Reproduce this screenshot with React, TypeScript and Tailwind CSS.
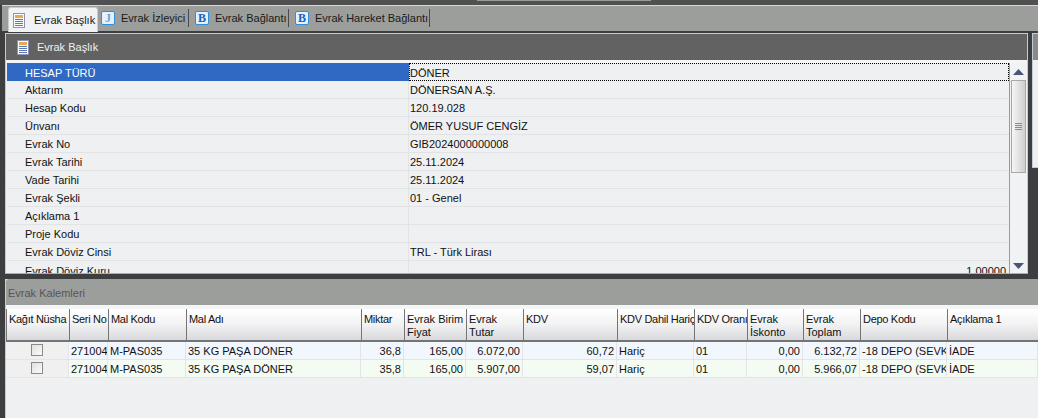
import React from 'react';

const font = 'font-["Liberation_Sans","Arial",sans-serif]';

const fields: [string, string][] = [
  ['Aktarım', 'DÖNERSAN A.Ş.'],
  ['Hesap Kodu', '120.19.028'],
  ['Ünvanı', 'ÖMER YUSUF CENGİZ'],
  ['Evrak No', 'GIB2024000000008'],
  ['Evrak Tarihi', '25.11.2024'],
  ['Vade Tarihi', '25.11.2024'],
  ['Evrak Şekli', '01 - Genel'],
  ['Açıklama 1', ''],
  ['Proje Kodu', ''],
  ['Evrak Döviz Cinsi', 'TRL - Türk Lirası'],
];

const cols = [
  'Kağıt Nüsha', 'Seri No', 'Mal Kodu', 'Mal Adı', 'Miktar', 'Evrak Birim Fiyat', 'Evrak Tutar', 'KDV',
  'KDV Dahil Hariç', 'KDV Oranı', 'Evrak İskonto', 'Evrak Toplam', 'Depo Kodu', 'Açıklama 1',
];

const gridCols = 'grid-cols-[63px_39px_78px_175px_43px_62px_57px_94px_77px_53px_56px_57px_87px_91px]';

const rows = [
  { bg: 'bg-[#f2f7fe]', cells: ['271004', 'M-PAS035', '35 KG PAŞA DÖNER', '36,8', '165,00', '6.072,00', '60,72', 'Hariç', '01', '0,00', '6.132,72', '-18 DEPO (SEVK DEPOSU)', 'İADE'] },
  { bg: 'bg-[#f3fbf2]', cells: ['271004', 'M-PAS035', '35 KG PAŞA DÖNER', '35,8', '165,00', '5.907,00', '59,07', 'Hariç', '01', '0,00', '5.966,07', '-18 DEPO (SEVK DEPOSU)', 'İADE'] },
];

// columns with right aligned values (index in cells)
const rightAligned = [3, 4, 5, 6, 9, 10];

function DocIcon() {
  return (
    <svg width="12" height="15" viewBox="0 0 12 15" className="shrink-0">
      <rect x="0.5" y="0.5" width="11" height="14" fill="#fdfdfd" stroke="#8c94b4" />
      <rect x="2" y="2" width="8" height="3" fill="#e9a94f" />
      <path d="M2 6.5h8M2 8.5h8M2 10.5h8M2 12.5h8" stroke="#5f76b0" />
    </svg>
  );
}

function LetterIcon({ letter, light }: { letter: string; light?: boolean }) {
  return (
    <div className={`w-[14px] h-[14px] shrink-0 rounded-[2px] border border-[#2f8fd8] bg-[#e6f1fb] flex items-center justify-center font-["Liberation_Serif",serif] text-[12px] font-bold leading-none ${light ? 'text-[#6f9fd8]' : 'text-[#1d62b8]'}`}>
      {letter}
    </div>
  );
}

function Tab({ icon, label, w }: { icon: React.ReactNode; label: string; w: string }) {
  return (
    <div className={`h-[18px] flex items-center gap-[6px] whitespace-nowrap border-r border-[#4a4a4a] ${w}`}>
      {icon}
      <span className="text-[#1a1a1a]">{label}</span>
    </div>
  );
}

function Arrow({ up }: { up?: boolean }) {
  return (
    <svg width="11" height="6" viewBox="0 0 11 6">
      <path d={up ? 'M5.5 0L11 6H0z' : 'M0 0h11L5.5 6z'} fill="#4a5478" />
    </svg>
  );
}

export default function App() {
  return (
    <div className={`${font} w-[1038px] h-[418px] overflow-hidden flex flex-col bg-[#3c3e40] text-[11px] leading-[14px] text-[#111]`}>
      {/* top edge of the window behind */}
      <div className="h-[5px] shrink-0 bg-[#505050] pl-[477px]">
        <div className="w-[174px] h-px bg-[#9a9a9a]" />
      </div>

      {/* tab strip */}
      <div className="h-[26px] ml-[2px] border-t border-[#cfd8e6] bg-[#9c9e9c] flex items-start pl-[6px] shrink-0">
        <div className="w-[90px] h-[25px] mt-px bg-[#f1f2f4] rounded-t-[3px] border border-b-0 border-[#c8ccd0] flex items-center gap-[9px] whitespace-nowrap pl-[4px] mr-[3px]">
          <DocIcon />
          <span className="text-[#1a1a1a]">Evrak Başlık</span>
        </div>
        <div className="flex items-center gap-[6px] pt-[3px]">
          <Tab icon={<LetterIcon letter="J" light />} label="Evrak İzleyici" w="w-[88px]" />
          <Tab icon={<LetterIcon letter="B" />} label="Evrak Bağlantı" w="w-[94px]" />
          <Tab icon={<LetterIcon letter="B" />} label="Evrak Hareket Bağlantı" w="w-[135px]" />
        </div>
      </div>

      {/* upper panels */}
      <div className="flex mt-[2px] h-[241px] shrink-0 pl-[5px]">
        <div className="w-[1023px] border border-[#c2ccd8] border-b-[#a9adb3] flex flex-col bg-[#eff0f2]">
          <div className="h-[26px] bg-[#626262] flex items-center gap-[8px] pl-[11px] text-[#f0f0f0] shrink-0">
            <DocIcon />
            <span>Evrak Başlık</span>
          </div>
          <div className="h-[3px] bg-[#f4f5f6] shrink-0" />
          <div className="flex flex-1 min-h-0">
            <div className="flex-1 overflow-hidden pl-px border-r border-[#9a9a9a]">
              <div className="h-[18px] flex">
                <div className="w-[402px] bg-[#3069c3] text-white pl-[18px] pt-px flex items-center">HESAP TÜRÜ</div>
                <div className="flex-1 border border-dotted border-black pt-px flex items-center">DÖNER</div>
              </div>
              {fields.map(([k, v]) => (
                <div key={k} className="h-[18px] flex border-b border-[#e2e3e5]">
                  <div className="w-[402px] pl-[18px] pt-px flex items-center border-r border-[#e2e3e5]">{k}</div>
                  <div className="flex-1 pl-px pt-px flex items-center">{v}</div>
                </div>
              ))}
              <div className="h-[18px] flex">
                <div className="w-[402px] pl-[18px] pt-px flex items-center border-r border-[#e2e3e5]">Evrak Döviz Kuru</div>
                <div className="flex-1 pr-[3px] pt-px flex items-center justify-end">1,00000</div>
              </div>
            </div>
            {/* scrollbar */}
            <div className="w-[17px] shrink-0 bg-[#f1f2f3] flex flex-col items-center">
              <div className="h-[17px] flex items-center justify-center shrink-0"><Arrow up /></div>
              <div className="w-[15px] h-[93px] border border-[#a8a8a8] bg-gradient-to-r from-[#f6f6f6] to-[#cfcfcf] flex flex-col items-center justify-center gap-px">
                <div className="w-[7px] h-px bg-[#8a8a8a]" />
                <div className="w-[7px] h-px bg-[#8a8a8a]" />
                <div className="w-[7px] h-px bg-[#8a8a8a]" />
                <div className="w-[7px] h-px bg-[#8a8a8a]" />
              </div>
              <div className="flex-1" />
              <div className="h-[15px] flex items-center justify-center shrink-0"><Arrow /></div>
            </div>
          </div>
        </div>
        {/* side panel, cut off by the window edge */}
        <div className="ml-[4px] flex-1 h-[135px] border-l border-t border-b border-[#c2ccd8] flex flex-col">
          <div className="h-[26px] bg-[#8a8a8a]" />
          <div className="flex-1 bg-[#eff0f2]" />
        </div>
      </div>

      {/* lower panel */}
      <div className="flex-1 mt-[5px] ml-[5px] bg-[#eff0f2] border-l border-[#c2ccd8] flex flex-col min-h-0">
        <div className="h-[26px] bg-[#9c9e9c] rounded-tl-[3px] flex items-center pl-[2px] pt-[2px] text-[#555] shrink-0">Evrak Kalemleri</div>
        <div className="h-[4px] shrink-0 bg-[#f4f5f6]" />
        <div className={`grid ${gridCols} w-[1032px] h-[33px] shrink-0 border-b-2 border-[#747474]`}>
          {cols.map((c, i) => (
            <div key={c + i} className={`bg-gradient-to-b from-white via-[#f2f2f3] to-[#d8d9dc] border-l border-[#747474] pl-[2px] pt-[4px] leading-[13px] overflow-hidden text-[#111] ${c.startsWith('Evrak') ? '' : 'whitespace-nowrap tracking-[-0.3px]'}`}>
              {c}
            </div>
          ))}
        </div>
        {rows.map((r, ri) => (
          <div key={ri} className={`grid ${gridCols} w-[1032px] h-[18px] shrink-0 border-b border-[#e2e4e6] ${r.bg}`}>
            <div className="bg-[#f0f0f0] flex items-center justify-center border-r border-[#e2e4e6]">
              <div className="w-[12px] h-[12px] border border-[#8a8a8a] bg-gradient-to-br from-[#e0e0e0] to-[#fafafa] mb-[2px]" />
            </div>
            {r.cells.map((c, i) => (
              <div key={i} className={`flex items-center overflow-hidden whitespace-nowrap border-r border-[#e2e4e6] px-[2px] pt-px ${rightAligned.includes(i) ? 'justify-end' : ''}`}>
                {c}
              </div>
            ))}
          </div>
        ))}
      </div>
    </div>
  );
}
